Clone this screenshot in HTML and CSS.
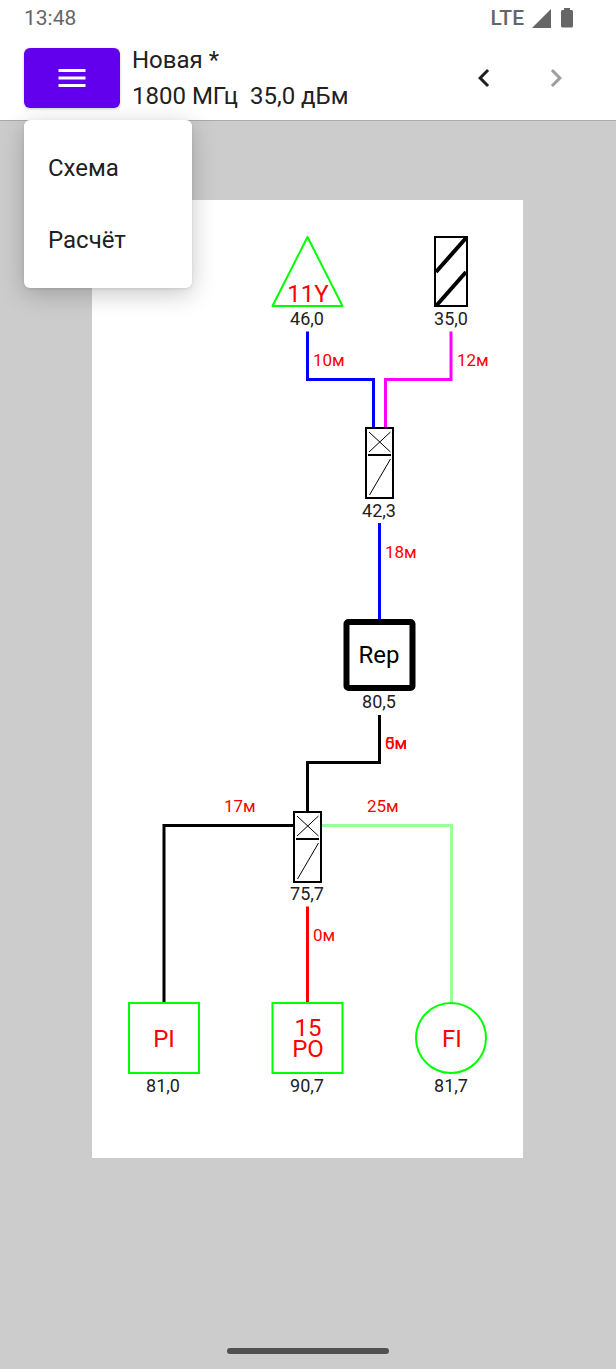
FILE: index.html
```html
<!DOCTYPE html>
<html lang="ru">
<head>
<meta charset="utf-8">
<meta name="viewport" content="width=device-width, initial-scale=1">
<title>Новая *</title>
<link rel="stylesheet" href="styles.css">
</head>
<body>
<div class="status">
  <span>13:48</span>
  <span class="status-icons">
    <span class="network">LTE</span>
    <svg class="signal" viewBox="0 0 19 19" aria-hidden="true"><path d="M19 0V19H0Z"/></svg>
    <svg class="battery" viewBox="0 0 12 20" aria-hidden="true"><path d="M3 0H9V2H10.5Q12 2 12 3.5V18Q12 19.500 10.500 19.500H1.500Q0 19.500 0 18V3.500Q0 2 1.500 2H3Z"/></svg>
  </span>
</div>

<header class="bar">
  <div class="menu-wrap">
    <button class="menu-button" type="button" aria-label="Меню" aria-expanded="true" aria-controls="menu">
      <svg viewBox="0 0 36 36" aria-hidden="true"><path d="M4.500 9H31.500V12H4.500ZM4.500 16.500H31.500V19.500H4.500ZM4.500 24H31.500V27H4.500Z"/></svg>
    </button>
    <div class="menu" id="menu" role="menu">
      <button class="menu-item" type="button" role="menuitem">Схема</button>
      <button class="menu-item" type="button" role="menuitem">Расчёт</button>
    </div>
  </div>
  <div class="title">
    <div>Новая *</div>
    <div>1800 МГц&nbsp; 35,0 дБм</div>
  </div>
  <div class="history">
    <button class="step" type="button" aria-label="Назад">
      <svg viewBox="0 0 24 24" aria-hidden="true"><path d="M15.410 7.410L14 6l-6 6 6 6 1.410-1.410L10.830 12z"/></svg>
    </button>
    <button class="step" type="button" aria-label="Вперёд" disabled>
      <svg viewBox="0 0 24 24" aria-hidden="true"><path d="M10 6L8.590 7.410 13.170 12l-4.580 4.590L10 18l6-6z"/></svg>
    </button>
  </div>
</header>

<main class="canvas">
  <svg class="sheet" viewBox="0 0 431 958" role="img" aria-label="Схема">
    <defs>
      <g id="divider">
        <rect class="frame" x="-13" y="1" width="27" height="70"/>
        <path class="thin" d="M-10 5L11.500 25M11.500 5L-10 25M11.500 32L-9.500 68"/>
        <path class="frame" d="M-11 28H12"/>
      </g>
    </defs>

    <g class="wires">
      <path class="blue" d="M215.500 131.500V179.500H281.500V228"/>
      <path class="magenta" d="M359 131.500V179.500H293.500V228"/>
      <path class="blue" d="M287.500 323V420"/>
      <path class="black" d="M287.500 515V562.500H215.500V611"/>
      <path class="black" d="M202 625.500H72V803"/>
      <path class="light" d="M229 625.500H359.500V803"/>
      <path class="red" d="M215.500 706.500V803"/>
    </g>

    <path class="antenna" d="M215.500 37L250.500 106H180.500Z"/>
    <rect class="frame" x="343" y="37" width="32" height="69"/>
    <path class="stripe" d="M374 38L344 72M374 72L344 106"/>
    <use href="#divider" x="287" y="227"/>
    <use href="#divider" x="215" y="611"/>
    <rect class="repeater" x="254.500" y="422" width="66" height="66" rx="2"/>
    <rect class="antenna" x="37" y="803" width="70" height="70"/>
    <rect class="antenna" x="180.500" y="803" width="70" height="70"/>
    <circle class="antenna" cx="359" cy="838" r="35"/>

    <g class="name">
      <text x="216" y="102">11Y</text>
      <text class="dark" x="287" y="463">Rep</text>
      <text x="72" y="847">PI</text>
      <text x="216" y="836">15</text>
      <text x="216" y="857">PO</text>
      <text x="360" y="847">FI</text>
    </g>
    <g class="level">
      <text x="215" y="125">46,0</text>
      <text x="359" y="125">35,0</text>
      <text x="287" y="317">42,3</text>
      <text x="287" y="508">80,5</text>
      <text x="215" y="700">75,7</text>
      <text x="71" y="892">81,0</text>
      <text x="215" y="892">90,7</text>
      <text x="359" y="892">81,7</text>
    </g>
    <g class="length">
      <text x="221" y="166">10м</text>
      <text x="365" y="166">12м</text>
      <text x="293" y="358">18м</text>
      <text x="293" y="549">0м</text>
      <text x="293" y="549">5м</text>
      <text x="132" y="612">17м</text>
      <text x="275" y="612">25м</text>
      <text x="221" y="741">0м</text>
    </g>
  </svg>
</main>

<footer class="gesture"><div class="pill"></div></footer>
</body>
</html>
```
FILE: styles.css
```css
* { box-sizing: border-box; }

body {
  margin: 0;
  min-height: 100vh;
  display: flex;
  flex-direction: column;
  background: #ccc;
  color: #212121;
  font: 24px/36px Roboto, sans-serif;
}

button {
  border: 0;
  margin: 0;
  padding: 0;
  background: none;
  color: inherit;
  font: inherit;
}

svg { display: block; }

.status {
  display: flex;
  justify-content: space-between;
  height: 36px;
  padding: 0 43px 0 24px;
  background: #fff;
  color: #666;
  font-size: 21px;
}

.status-icons {
  display: flex;
  align-items: center;
  gap: 8px;
  fill: #666;
}

.network { font-weight: 500; }
.signal { width: 19px; height: 19px; }
.battery { width: 12px; height: 20px; margin-left: 2px; }

.bar {
  display: flex;
  align-items: center;
  height: 85px;
  padding: 0 24px;
  background: #fff;
  border-bottom: 1px solid #aaa;
}

.menu-wrap { position: relative; }

.menu-button {
  display: flex;
  align-items: center;
  justify-content: center;
  width: 96px;
  height: 60px;
  border-radius: 6px;
  background: #6200ee;
  fill: #fff;
  box-shadow: 0 1px 3px rgba(0, 0, 0, .2);
}

.menu-button svg, .step svg { width: 36px; height: 36px; }

.menu {
  position: absolute;
  top: 72px;
  left: 0;
  z-index: 1;
  width: 168px;
  padding: 12px 0;
  border-radius: 6px;
  background: #fff;
  box-shadow: 0 6px 24px rgba(0, 0, 0, .22), 0 1px 3px rgba(0, 0, 0, .1);
}

.menu-item {
  display: block;
  width: 100%;
  height: 72px;
  padding: 0 24px;
  text-align: left;
}

.title { flex: 1; padding-left: 12px; white-space: nowrap; }
.history { display: flex; }

.step {
  display: flex;
  align-items: center;
  justify-content: center;
  width: 72px;
  height: 72px;
  fill: #212121;
}

.step:disabled { fill: #9e9e9e; }

.canvas {
  flex: 1;
  display: flex;
  justify-content: center;
  align-items: flex-start;
  padding: 79px 1px 24px 0;
}

.sheet {
  width: 431px;
  max-width: 100%;
  height: auto;
  background: #fff;
}

.wires { fill: none; stroke-width: 3; }
.blue { stroke: #00f; }
.magenta { stroke: #f0f; }
.black { stroke: #000; }
.light { stroke: #9f9; }
.red { stroke: #f00; }

.frame { fill: none; stroke: #000; stroke-width: 2; }
.thin { fill: none; stroke: #000; stroke-width: 1; }
.stripe { fill: none; stroke: #000; stroke-width: 4; }
.antenna { fill: none; stroke: #0f0; stroke-width: 2; stroke-linejoin: round; }
rect.antenna { stroke-linejoin: miter; }
.repeater { fill: none; stroke: #000; stroke-width: 6; }

.name { fill: #f00; font-size: 24px; text-anchor: middle; }
.dark { fill: #000; }
.level { fill: #212121; font-size: 18px; text-anchor: middle; }
.length { fill: #f00; font-size: 17px; }

.gesture {
  display: flex;
  justify-content: center;
  padding-bottom: 15px;
}

.pill {
  width: 162px;
  height: 6px;
  border-radius: 3px;
  background: #505050;
}
```
